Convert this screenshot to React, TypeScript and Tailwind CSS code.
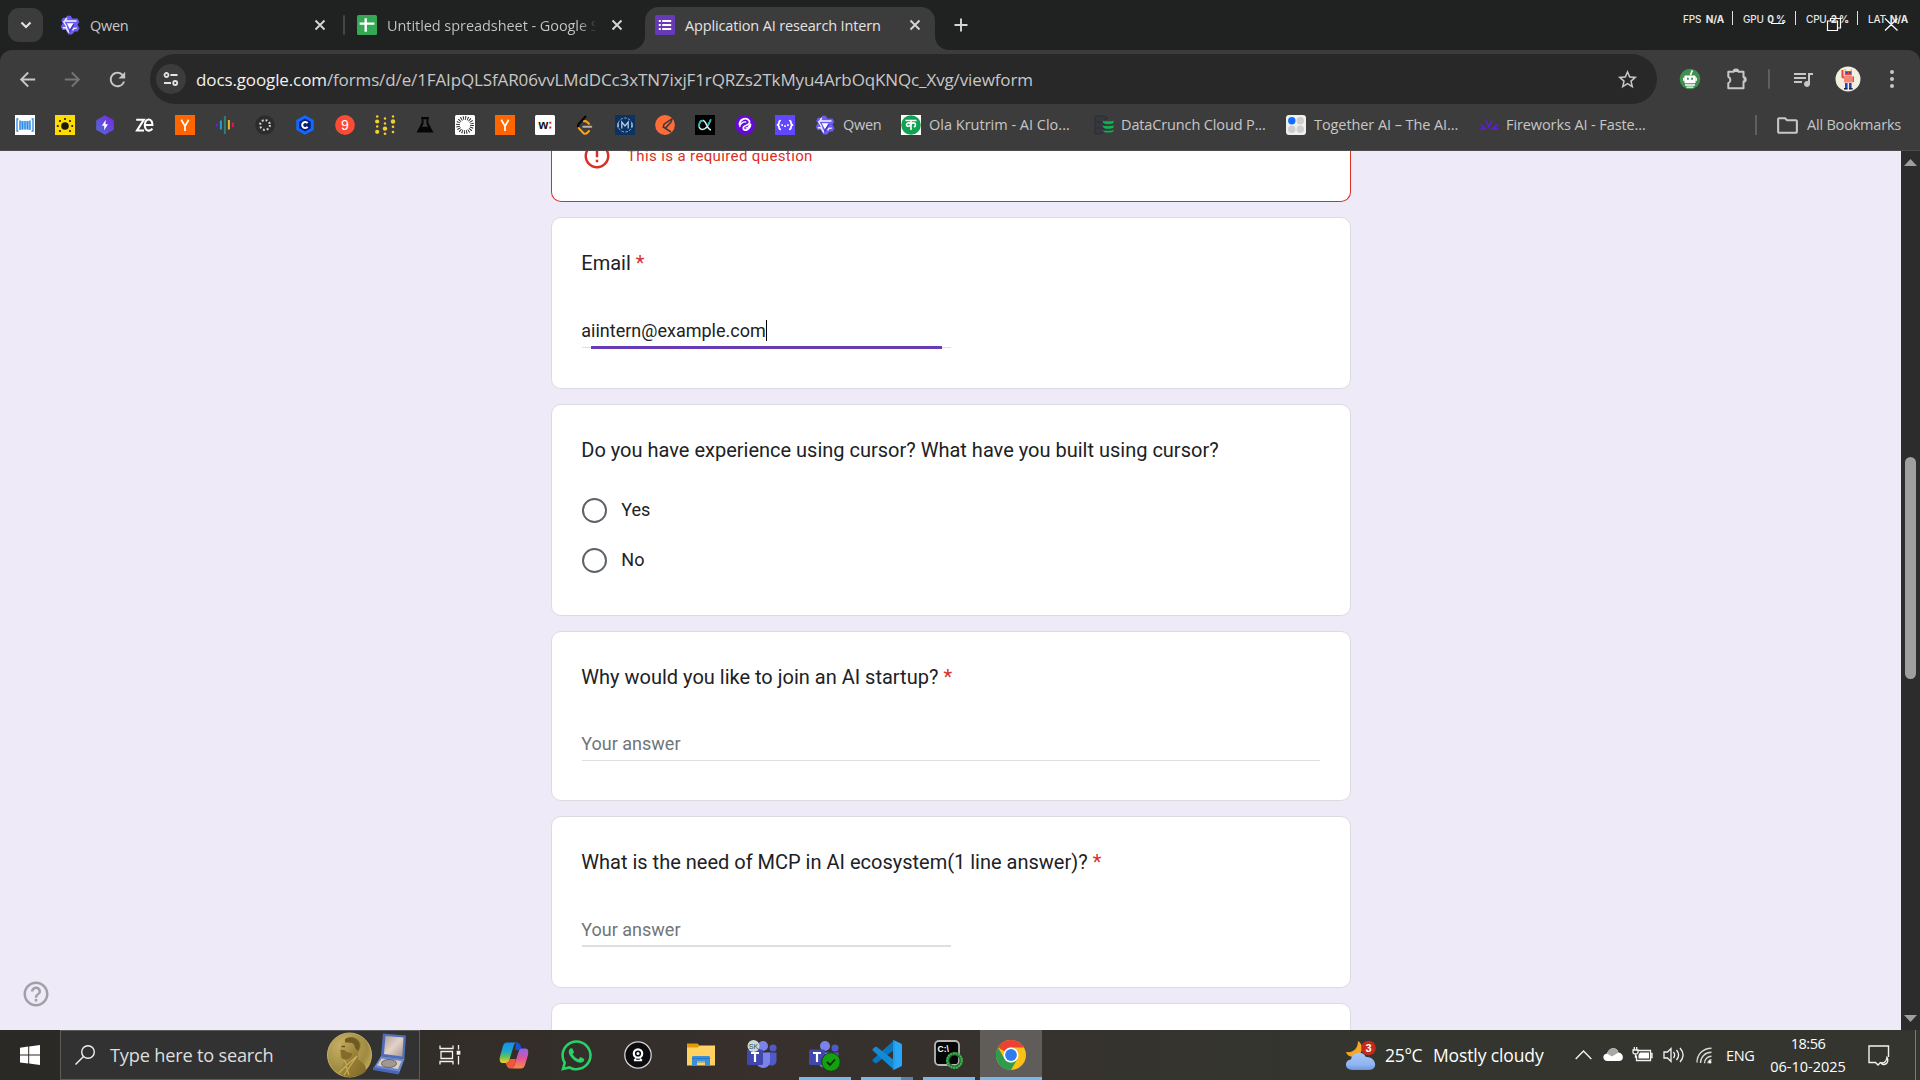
import type { ReactNode } from "react";
import {
  MdArrowBack,
  MdArrowForward,
  MdErrorOutline,
  MdHelpOutline,
  MdOutlineFolder,
  MdQueueMusic,
  MdRefresh,
  MdStarBorder,
} from "react-icons/md";
import { FaWhatsapp } from "react-icons/fa";

/* ---------- browser icons ---------- */

function QwenIcon() {
  return (
    <svg width="20" height="20" viewBox="0 0 20 20" className="shrink-0">
      <path d="M7 .8h3.800l1.500 2.700h5.200l1.800 3.200-1.800 3 2 3.600-1.800 3.200h-3L12 19.500H8.300L5.800 15H2.500L.7 11.800l2-3.500L1.200 5.500 3 2.800h3z" fill="#6a5cf0" />
      <path d="M6.800 2.800 4.800 6h11.700M2.800 12.800h3.400L9 17.500" fill="none" stroke="#f4f2ff" strokeWidth="1.500" />
      <path d="M6.800 8.300 10 14.200l3.600-5.900z" fill="#fff" />
      <path d="m16.800 13.200-3 .100-1.200 2.200M3.400 6.200 7 12.500" fill="none" stroke="#f4f2ff" strokeWidth="1.300" />
      <path d="m9.300 16.800 4.500-7.500" stroke="#3a2bc8" strokeWidth="1.200" />
    </svg>
  );
}

function SheetsIcon() {
  return (
    <svg width="20" height="20" viewBox="0 0 20 20" className="shrink-0">
      <rect width="20" height="20" rx="1.5" fill="#34a853" />
      <path d="M8.7 3.3v13.4M2.6 8.6h14.8" stroke="#fff" strokeWidth="2.4" />
    </svg>
  );
}

function FormsIcon() {
  return (
    <svg width="20" height="20" viewBox="0 0 20 20" className="shrink-0">
      <rect width="20" height="20" rx="1.5" fill="#673ab7" />
      <g fill="#fff">
        <path d="M3.8 5h2v2h-2zM3.8 9h2v2h-2zM3.8 13h2v2h-2zM7.2 5h9v2h-9zM7.2 9h9v2h-9zM7.2 13h9v2h-9z" />
      </g>
    </svg>
  );
}

function CloseIcon() {
  return (
    <svg width="16" height="16" viewBox="0 0 16 16" className="shrink-0">
      <path d="m3.5 3.5 9 9m0-9-9 9" stroke="#d6d6d6" strokeWidth="1.9" />
    </svg>
  );
}

function PuzzleIcon() {
  return (
    <svg width="24" height="24" viewBox="0 0 24 24" className="shrink-0">
      <path
        d="M3.3 4.8h5.4a2.3 2.3 0 0 1 4.6 0h5.2v5.4a2.2 2.2 0 0 1 0 4.4v6.6H3.3v-5a3.5 3.5 0 0 0 0-6.4z"
        fill="none"
        stroke="#c7c7c7"
        strokeWidth="2"
        strokeLinejoin="round"
      />
      <path d="M8.6 4.9a2.3 2.3 0 0 1 4.8 0zM18.6 10.1a2.3 2.3 0 0 1 0 4.6z" fill="#c7c7c7" />
    </svg>
  );
}

function RobotBadge() {
  return (
    <svg width="22" height="22" viewBox="0 0 22 22" className="shrink-0">
      <circle cx="11" cy="11" r="10.3" fill="#3f9150" />
      <path d="m11.5 7 1.8-4.6" stroke="#fff" strokeWidth="1.6" />
      <rect x="5.3" y="7.6" width="11.4" height="7.6" rx="1.2" fill="#fff" />
      <path d="M4 9.8h1.5v3H4zM16.5 9.8H18v3h-1.500z" fill="#fff" />
      <path d="M8 9.8h1.800v1.900H8zM12.200 9.800H14v1.900h-1.800z" fill="#3f9150" />
      <path d="M6 17h10M7.500 19.200h7" stroke="#fff" strokeWidth="1.300" />
    </svg>
  );
}

function Avatar() {
  return (
    <svg width="26" height="26" viewBox="0 0 26 26" className="shrink-0">
      <circle cx="13" cy="13" r="12.5" fill="#f3efe0" />
      <path d="M9.500 3v1.800h1.500V3zM15.500 3v1.800H17V3z" fill="#f0b840" />
      <rect x="9.800" y="5" width="7" height="4.400" fill="#e8463c" />
      <path d="M10.800 6h2v1.400h-2zM14 6h2v1.400h-2z" fill="#2b47b8" />
      <rect x="9" y="10" width="8.500" height="6.500" fill="#f2857c" />
      <path d="M6.500 4h2v7h-2zM17.500 10.500H19v5.500h-1.500zM6.800 10.500H9v1.800H6.800z" fill="#e8463c" />
      <path d="M10 17h2.600v5H10zM14 17h2.600v5H14z" fill="#2346b0" />
      <path d="M9 22h3.600v1.400H9zM14 22h3.600v1.400H14z" fill="#142058" />
    </svg>
  );
}

/* ---------- bookmark icons ---------- */

function Ico({ children }: { children: ReactNode }) {
  return (
    <svg width="20" height="20" viewBox="0 0 20 20" className="shrink-0 overflow-visible">
      {children}
    </svg>
  );
}

const iconText = '"Liberation Sans", sans-serif';

const smallBookmarks: ReactNode[] = [
  <>
    <rect width="20" height="20" fill="#fff" />
    <path d="M4.500 5.500c3.500 1 7.500 1 11 0v9.500c-3.500-1-7.500-1-11 0z" fill="#8cc4f6" />
    <path d="M3.500 3.800H2v12.400h1.500M16.500 3.800H18v12.400h-1.500" fill="none" stroke="#2f86d8" strokeWidth="1.300" />
    <path d="M5 5.500V15M7.500 6v8.500M10 6v8.500M12.500 6v8.500M15 5.500V15" stroke="#2f8be2" strokeWidth="1.300" />
  </>,
  <>
    <rect width="20" height="20" fill="#fcdc04" />
    <circle cx="10" cy="11" r="3.800" fill="#1d1a0d" />
    <g fill="#1d1a0d">
      <circle cx="10" cy="4" r="1.100" /><circle cx="5" cy="6" r="1.100" /><circle cx="15" cy="6" r="1.100" />
      <circle cx="2.800" cy="11" r="1.100" /><circle cx="17.200" cy="11" r="1.100" /><circle cx="5" cy="16" r="1.100" />
      <circle cx="15" cy="16" r="1.100" />
    </g>
  </>,
  <>
    <defs>
      <linearGradient id="hexBolt" x1="0" y1="1" x2="1" y2="0">
        <stop offset="0" stopColor="#4f6fd0" /><stop offset="1" stopColor="#7a25e8" />
      </linearGradient>
    </defs>
    <path d="m10 .3 8.800 5v9.400l-8.800 5-8.800-5V5.300z" fill="url(#hexBolt)" />
    <path d="M10.800 4.800 6.800 10.800h2.500l-.3 4.400 4-6h-2.600z" fill="#fff" />
  </>,
  <path d="M1.200 4.700h7.600L2 15.500h7M10 10h7.400c.3-7.200-7.600-7.400-7.600 0 0 6.800 5.400 6.600 7.600 3.600" fill="none" stroke="#fff" strokeWidth="2.100" />,
  <>
    <rect width="20" height="20" fill="#ff6600" />
    <path d="m6.300 4.800 3.700 6.400 3.700-6.400M10 11v5" fill="none" stroke="#fff" strokeWidth="1.700" />
  </>,
  <g strokeWidth="2">
    <path d="M1.900 8.500v3" stroke="#6a1fd0" /><path d="M5.900 5.500v9" stroke="#1b9fe0" /><path d="M9.900 1v18" stroke="#2d8077" />
    <path d="M13.900 5v9.500" stroke="#f0b81a" /><path d="M17.800 7.500V12" stroke="#e8135c" />
  </g>,
  <>
    <circle cx="10" cy="10" r="9.800" fill="#2c2c2c" />
    <circle cx="10" cy="10" r="4.900" fill="none" stroke="#d4d4d4" strokeWidth="2" strokeDasharray="1.900 1.950" />
  </>,
  <>
    <path d="m10 .2 8.700 4.900v9.800L10 19.800l-8.700-4.900V5.100z" fill="#1369ff" />
    <path d="m10 3.500 5.800 3.200v6.600L10 16.500l-5.800-3.200V6.700z" fill="#0a1e78" />
    <path d="M12.600 8.200a3 3 0 1 0 0 3.600" fill="none" stroke="#fff" strokeWidth="2" />
  </>,
  <>
    <circle cx="10" cy="10" r="9.900" fill="#fb4a36" />
    <text x="10" y="15" textAnchor="middle" fontFamily={iconText} fontSize="14" fill="#fff">9</text>
  </>,
  <g fill="#f5cf2e">
    <circle cx="2.200" cy="1.500" r="1.300" /><circle cx="2.200" cy="6.500" r="2.100" /><circle cx="2.200" cy="11.500" r="1.200" /><circle cx="2.200" cy="16.800" r="2.100" />
    <circle cx="10" cy="3.500" r="1.200" /><circle cx="10" cy="8.500" r="1.200" /><circle cx="10" cy="13.600" r="2.200" /><circle cx="10" cy="18.800" r="1.300" />
    <circle cx="18" cy="1.500" r="1.200" /><circle cx="18" cy="6.500" r="2.200" /><circle cx="18" cy="11.800" r="1.300" /><circle cx="18" cy="17" r="1.300" />
  </g>,
  <>
    <path d="M7.200 3v5L2.600 16.800h14.800L12.800 8V3" fill="#050505" stroke="#050505" strokeWidth="1.200" />
    <path d="M6 2.800h8" stroke="#050505" strokeWidth="1.500" />
    <path d="M8.500 4.200h3v4.500l1.600 3H6.900l1.600-3z" fill="#3c3c3c" />
  </>,
  <>
    <rect width="20" height="20" rx="1.500" fill="#fff" />
    <circle cx="10" cy="10" r="7" fill="none" stroke="#222" strokeWidth="3.800" strokeDasharray=".9 1.300" />
  </>,
  <>
    <rect width="20" height="20" fill="#ff6600" />
    <path d="m6.300 4.800 3.700 6.400 3.700-6.400M10 11v5" fill="none" stroke="#fff" strokeWidth="1.700" />
  </>,
  <>
    <rect width="20" height="20" rx="1.500" fill="#fff" />
    <text x="3.400" y="13.500" fontFamily={iconText} fontSize="12.500" fontWeight="700" fill="#111">w</text>
    <path d="M14.300 6.800h2v2h-2zM14.300 11.500h2v2h-2z" fill="#e3262e" />
  </>,
  <g fill="none" strokeWidth="2.100" strokeLinecap="round">
    <path d="M10.500 1.500 3.800 9c-1 1.300-1 2.600 0 3.800" stroke="#070707" />
    <path d="M3.800 13c.5.800 1 1.400 2 2.300l2.500 2.600c1.200 1.100 2.800 1 4-.2l1.700-1.700M9 6.200c1.200-.3 2.200 0 3.100.900l1.800 1.700" stroke="#ffa116" />
    <path d="M8.300 11.700h7.900" stroke="#b3b3b3" />
  </g>,
  <>
    <rect width="20" height="20" fill="#0b3260" />
    <circle cx="10" cy="10" r="7" fill="none" stroke="#8fb4d6" strokeWidth="1" strokeDasharray="2.500 1.500" />
    <path d="M6.800 13.500V7l3.200 4 3.200-4v6.500M3 8v4.500M17 8v4.500" fill="none" stroke="#b4cde4" strokeWidth="1.300" />
  </>,
  <>
    <circle cx="10" cy="10" r="9.900" fill="#ff6c37" />
    <path d="m17 3.800-8 5.400-.8 3 2.600.6 5.200-5.700zM9 12.500l7 4.500" fill="none" stroke="#3c3c3c" strokeWidth="1.500" />
  </>,
  <>
    <rect width="20" height="20" fill="#000" />
    <path d="M15.800 4.500c-2 5.500-5 10-8.500 10-4.700 0-4-9 .7-9 3.300 0 4 9 8 9.500" fill="none" stroke="#d9f4f4" strokeWidth="1.500" />
    <path d="M4.300 12c-.8-3 .8-6.500 3.700-6.500M12.500 10.500c1.200-2 2.300-3.700 3.300-6" fill="none" stroke="#17b8b8" strokeWidth="1.700" />
  </>,
  <>
    <circle cx="10" cy="10" r="9.900" fill="#6708d6" />
    <path d="M4.500 9.500C4.500 4.500 10 2.500 13 4.500c2.800 2 1.500 4.500-1 5.500S7.500 12 8.500 14c1.200 2.300 6.500.8 7-4.500" fill="none" stroke="#fff" strokeWidth="1.800" strokeLinecap="round" />
    <path d="M4.800 11.500C5 9 8 6.500 10.800 7M11 13c2 0 2.800-1 3.500-3" fill="none" stroke="#fff" strokeWidth="1.300" strokeLinecap="round" />
  </>,
  <>
    <rect width="20" height="20" fill="#6147ff" />
    <path d="M6 5.500c-2 0-2 .8-2 2.200S3.500 10 1.800 10C3.500 10 4 11 4 12.300s0 2.200 2 2.200M14 5.500c2 0 2 .8 2 2.200s.5 2.300 2.200 2.300c-1.700 0-2.200 1-2.200 2.300s0 2.200-2 2.200" fill="none" stroke="#fff" strokeWidth="1.700" />
    <path d="M6.300 9.300h1.700v1.700H6.300zM9.200 10.300h1.700V12H9.200zM12.100 9.300h1.700v1.700h-1.700z" fill="#fff" />
  </>,
];

/* ---------- browser chrome ---------- */

function TabStrip() {
  return (
    <div className="relative flex h-[50px] items-center bg-[#202221] text-[14.5px] text-[#dcdcdc]">
      <div className="ml-2 flex h-[34px] w-[35px] shrink-0 items-center justify-center rounded-[11px] bg-[#3c3c3c]">
        <svg width="12" height="12" viewBox="0 0 12 12">
          <path d="m1.500 3.500 4.500 4.500 4.500-4.500" fill="none" stroke="#e3e3e3" strokeWidth="2.100" />
        </svg>
      </div>
      <div className="ml-[17px] flex w-[268px] shrink-0 items-center">
        <QwenIcon />
        <span className="ml-[10px] flex-1 pt-[2px] tracking-[-0.3px] text-[#c7c7c7]">Qwen</span>
        <CloseIcon />
      </div>
      <div className="ml-[15px] h-5 w-[2px] shrink-0 rounded bg-[#454746]" />
      <div className="ml-3 flex w-[268px] shrink-0 items-center">
        <SheetsIcon />
        <span className="ml-[10px] w-[212px] overflow-hidden whitespace-nowrap bg-linear-to-r from-[#c7c7c7] from-90% to-transparent to-[99%] bg-clip-text pt-[2px] tracking-[-0.06px] text-transparent">
          Untitled spreadsheet - Google S
        </span>
        <span className="ml-[10px]"><CloseIcon /></span>
      </div>
      <div className="relative ml-5 flex h-[43px] w-[290px] shrink-0 items-center self-end rounded-t-[14px] bg-[#3c3c3c] pb-[7px] pl-[10px]">
        <svg width="14" height="14" viewBox="0 0 14 14" className="absolute bottom-0 left-[-14px]">
          <path d="M14 0v14H0A14 14 0 0 0 14 0" fill="#3c3c3c" />
        </svg>
        <svg width="14" height="14" viewBox="0 0 14 14" className="absolute right-[-14px] bottom-0">
          <path d="M0 0v14h14A14 14 0 0 1 0 0" fill="#3c3c3c" />
        </svg>
        <FormsIcon />
        <span className="ml-[10px] w-[222px] whitespace-nowrap pt-[2px] tracking-[-0.15px] text-[#e3e3e3]">Application AI research Intern</span>
        <CloseIcon />
      </div>
      <svg width="16" height="16" viewBox="0 0 16 16" className="ml-[18px] shrink-0">
        <path d="M8 1.500v13M1.500 8h13" stroke="#d6d6d6" strokeWidth="1.900" />
      </svg>
      <StatsOverlay />
    </div>
  );
}

function Stat({ name, value, w }: { name: string; value: string; w: string }) {
  return (
    <div className={`flex shrink-0 items-center justify-between pt-[2px] ${w}`}>
      <span className="font-medium">{name}</span>
      <span className="font-bold">{value}</span>
    </div>
  );
}

function StatsOverlay() {
  return (
    <>
      <div className="absolute top-[11px] left-[1683px] flex h-[14px] items-center font-['Inter',sans-serif] text-[10px] tracking-[-0.2px] text-[#e6e6e6]">
        <Stat name="FPS" value="N/A" w="w-[41px]" />
        <div className="ml-2 h-[14px] w-px bg-[#e0e0e0]" />
        <Stat name="GPU" value="0 %" w="ml-[10px] w-[43px]" />
        <div className="ml-[9px] h-[14px] w-px bg-[#e0e0e0]" />
        <Stat name="CPU" value="2 %" w="ml-[10px] w-[43px]" />
        <div className="ml-2 h-[14px] w-px bg-[#e0e0e0]" />
        <Stat name="LAT" value="N/A" w="ml-[10px] w-[40px]" />
      </div>
      <svg width="132" height="16" viewBox="0 0 132 16" className="absolute top-[16px] left-[1770px]" fill="none" stroke="#fff" strokeWidth="1.200">
        <path d="M1 7.500h13M57.500 5h10v9.500h-10zM60.500 5V2.500h10V12h-3M115 2.500l12.500 12m0-12-12.500 12" />
      </svg>
    </>
  );
}

function Toolbar() {
  return (
    <div className="flex h-[58px] items-center text-[#c7c7c7]">
      <MdArrowBack size={23} className="ml-4 shrink-0" />
      <MdArrowForward size={23} className="ml-[22px] shrink-0 text-[#757575]" />
      <MdRefresh size={23} className="ml-[22px] shrink-0" />
      <div className="ml-[21px] flex h-[50px] w-[1507px] shrink-0 items-center rounded-full bg-[#282828]">
        <div className="ml-[6px] flex size-[30px] items-center justify-center rounded-full bg-[#3c3c3c]">
          <svg width="18" height="18" viewBox="0 0 18 18" fill="none" stroke="#e3e3e3" strokeWidth="1.800">
            <circle cx="4.500" cy="5" r="2" />
            <path d="M8.500 5h7M2 13h7" />
            <circle cx="13.200" cy="13" r="2" />
          </svg>
        </div>
        <span className="ml-[10px] flex-1 whitespace-nowrap pt-[2px] text-[17px] tracking-[-0.12px]">
          <span className="text-[#f0f0f0]">docs.google.com</span>
          /forms/d/e/1FAIpQLSfAR06vvLMdDCc3xTN7ixjF1rQRZs2TkMyu4ArbOqKNQc_Xvg/viewform
        </span>
        <MdStarBorder size={23} className="mr-[18px]" />
      </div>
      <span className="ml-[22px]"><RobotBadge /></span>
      <span className="ml-6"><PuzzleIcon /></span>
      <div className="ml-[19px] h-5 w-[2px] shrink-0 rounded bg-[#5f5f5f]" />
      <MdQueueMusic size={24} className="ml-[21px] shrink-0" />
      <span className="ml-5"><Avatar /></span>
      <svg width="6" height="20" viewBox="0 0 6 20" className="ml-[28px] shrink-0" fill="#c7c7c7">
        <circle cx="3" cy="3" r="2" /><circle cx="3" cy="10" r="2" /><circle cx="3" cy="17" r="2" />
      </svg>
    </div>
  );
}

function BookmarksBar() {
  return (
    <div className="flex h-[34px] items-center whitespace-nowrap pl-[15px] text-[14.5px] text-[#c7c7c7]">
      <div className="flex shrink-0 gap-5">
        {smallBookmarks.map((icon, i) => (
          <Ico key={i}>{icon}</Ico>
        ))}
      </div>
      <span className="ml-5"><QwenIcon /></span>
      <span className="ml-2 w-[38px] tracking-[-0.3px]">Qwen</span>
      <span className="ml-5">
        <Ico>
          <rect width="20" height="20" fill="#fff" />
          <circle cx="10" cy="10" r="9.800" fill="#12a150" />
          <path d="M4.500 5.500h11M10 5.500v9.500M10 9c-2-2-4.500-1-4.500.8s3 2 4.500-.3c1-2.500 4.500-2 4.500.2 0 1.500-.8 2-1.600 2.300" fill="none" stroke="#fff" strokeWidth="1.600" />
        </Ico>
      </span>
      <span className="ml-2 w-[141px]">Ola Krutrim - AI Clo...</span>
      <span className="ml-6">
        <Ico>
          <path d="M1 1h9l4 2-4 2v12l-4 2H1zM1 7h7M1 13h7" fill="#37373f" stroke="#2c2c3c" strokeWidth="1" />
          <path d="M8.500 5.500c2 1.200 8.500 1.200 11 0v2.400c-2.500 1.300-8.500 1.300-10 0zM8.500 10.300c2 1.200 8.500 1.200 11 0v2.400c-2.500 1.300-8.500 1.300-10 0zM8.500 15c2 1.200 8.500 1.200 11 0v1.500c-2.500 1.300-8.500 1.300-10 0z" fill="#06b84f" />
        </Ico>
      </span>
      <span className="ml-[7px] w-[145px] tracking-[-0.13px]">DataCrunch Cloud P...</span>
      <span className="ml-5">
        <Ico>
          <rect width="20" height="20" rx="3" fill="#f1efed" />
          <circle cx="5.800" cy="5.800" r="3.700" fill="#0f6fff" />
          <g fill="#d0cecd">
            <circle cx="14.300" cy="5.800" r="3.700" /><circle cx="5.800" cy="14.300" r="3.700" /><circle cx="14.300" cy="14.300" r="3.700" />
          </g>
        </Ico>
      </span>
      <span className="ml-2 w-[145px] tracking-[-0.08px]">Together AI – The AI...</span>
      <span className="ml-5">
        <Ico>
          <path d="m7 5.500 3 6.500 3-6.500M1.500 9.500l5 4.500H.2M18.500 9.500l-5 4.500h6.300" fill="none" stroke="#5b1fd8" strokeWidth="1.700" />
        </Ico>
      </span>
      <span className="ml-[7px] w-[141px] tracking-[-0.1px]">Fireworks AI - Faste...</span>
      <div className="ml-[108px] h-5 w-[2px] bg-[#5f5f5f]" />
      <MdOutlineFolder size={25} className="ml-[18px] shrink-0" />
      <span className="ml-[7px] tracking-[-0.2px]">All Bookmarks</span>
    </div>
  );
}

/* ---------- form ---------- */

function Title({ children, required }: { children: ReactNode; required?: boolean }) {
  return (
    <h2 className="ml-[-0.7px] text-[20px] leading-[30px] text-[#202124]">
      {children}
      {required && <span className="pl-[5px] text-[#d93025]">*</span>}
    </h2>
  );
}

function Card({ className, children }: { className: string; children?: ReactNode }) {
  return (
    <section className={`w-[800px] shrink-0 rounded-[10px] border border-[#dadce0] bg-white px-[30px] pt-[30px] ${className}`}>
      {children}
    </section>
  );
}

function Radio({ label }: { label: string }) {
  return (
    <div className="flex h-[50px] items-center">
      <div className="size-[25px] rounded-full border-[2.5px] border-[#5f6368]" />
      <span className="ml-[14.3px] text-[18px] leading-[24px] text-[#202124]">{label}</span>
    </div>
  );
}

function FormPage() {
  return (
    <main className="relative flex flex-1 flex-col items-start gap-[15px] overflow-hidden bg-[#eeeaf8] pl-[551px] font-['Roboto',sans-serif]">
      <section className="h-[51px] w-[800px] shrink-0 overflow-hidden rounded-b-[10px] border border-t-0 border-[#d93025] bg-white pl-[30px]">
        <div className="mt-[-10px] flex h-[30px] items-center text-[#d93025]">
          <MdErrorOutline size={30} />
          <span className="ml-[15px] text-[15px] tracking-[0.375px]">This is a required question</span>
        </div>
      </section>

      <Card className="h-[172px]">
        <Title required>Email</Title>
        <div className="mt-[37px] mb-px ml-[-0.7px] flex h-[30px] items-center text-[18px] text-[#202124]">
          aiintern@example.com
          <span className="h-[21px] w-px bg-black" />
        </div>
        <div className="flex h-[3px] w-[369px] items-center justify-center">
          <span className="h-px w-[9px] bg-[#dedede]" />
          <span className="h-[3px] flex-1 bg-[#673ab7]" />
          <span className="h-px w-[9px] bg-[#dedede]" />
        </div>
      </Card>

      <Card className="h-[212px]">
        <Title>Do you have experience using cursor? What have you built using cursor?</Title>
        <div className="mt-5">
          <Radio label="Yes" />
          <Radio label="No" />
        </div>
      </Card>

      <Card className="h-[170px]">
        <Title required>Why would you like to join an AI startup?</Title>
        <div className="mt-[37px] ml-[-0.7px] text-[18px] leading-[30px] text-[#70757a]">Your answer</div>
        <div className="mt-px h-px bg-[#dedede]" />
      </Card>

      <Card className="h-[172px]">
        <Title required>What is the need of MCP in AI ecosystem(1 line answer)?</Title>
        <div className="mt-[38px] ml-[-0.7px] text-[18px] leading-[30px] text-[#70757a]">Your answer</div>
        <div className="h-[2px] w-[369px] bg-[#dedede]" />
      </Card>

      <Card className="h-[172px]" />

      <MdHelpOutline size={30} className="absolute bottom-[21px] left-[21px] text-[#a19fa8]" />
    </main>
  );
}

function Scrollbar() {
  return (
    <div className="flex w-[19px] shrink-0 flex-col items-center bg-[#2c2c2c]">
      <svg width="13" height="7" viewBox="0 0 13 7" className="mt-2">
        <path d="M6.500 0 13 7H0z" fill="#9f9f9f" />
      </svg>
      <div className="mt-[291px] h-[222px] w-[11px] rounded-full bg-[#9f9f9f]" />
      <svg width="13" height="7" viewBox="0 0 13 7" className="mt-auto mb-2">
        <path d="M6.500 7 0 0h13z" fill="#9f9f9f" />
      </svg>
    </div>
  );
}

/* ---------- taskbar icons ---------- */

function NobelMedal() {
  return (
    <svg width="82" height="48" viewBox="0 0 82 48" className="shrink-0">
      <defs>
        <radialGradient id="gold" cx=".35" cy=".3" r=".8">
          <stop offset="0" stopColor="#c8b368" /><stop offset=".7" stopColor="#a08a42" /><stop offset="1" stopColor="#c9b260" />
        </radialGradient>
        <linearGradient id="bust" x1="0" y1="0" x2="1" y2="1">
          <stop offset="0" stopColor="#cdb96c" /><stop offset=".5" stopColor="#9c8339" /><stop offset="1" stopColor="#7d6526" />
        </linearGradient>
        <linearGradient id="lining" x1="0" y1="0" x2="1" y2="1">
          <stop offset="0" stopColor="#b49e94" /><stop offset=".5" stopColor="#e2d3c8" /><stop offset="1" stopColor="#a8958e" />
        </linearGradient>
      </defs>
      <circle cx="22.500" cy="24" r="22" fill="url(#gold)" stroke="#c5af63" strokeWidth="1" />
      <path d="M17 7c6-5 14-2 16.500 4 1.200 4-.5 8-2.500 11v6l6 5c1.500 2 2 5 2 7-4 4-10 6-16.500 6-5 0-9-2-11.500-4l5-9 1.500-4.500-4-1c-1.500-1.500-1-3.500-.5-5.500l-2-1.500 3-6c0-3 1-5 3-6.500z" fill="url(#bust)" />
      <path d="M18 8c5-3 12-2 14.500 4 .8 3 0 6-1.500 8l-3-3c0-3-1-4-3-5s-5-.5-7-.5z" fill="#6f5a20" />
      <path d="M13.500 19c3-1 5 .500 6 2l6 1.500c-1 4-4 6-8 6l-3-1.500z" fill="#836b2a" />
      <path d="m17 29 3 5 10-9-13 19M12 42l7-7 3 9" fill="none" stroke="#c9b260" strokeWidth="1.100" />
      <path d="M14.500 15.500h3.500" stroke="#5f4b18" strokeWidth="1.300" />
      <path d="m56 2.500 23 2-1.500 23.500L54 25z" fill="#4f6db8" />
      <path d="m58.500 5 18 1.500-1.200 19L57 23z" fill="url(#lining)" />
      <path d="m54 25 23.500 3L72 42.500l-26-4.500z" fill="#6a86cc" />
      <path d="m54.500 27.500 20 2.500-3.500 8-21-3.500z" fill="#d8ccc4" />
      <path d="m46 36 26 4.500-.500 3-25.500-4.500z" fill="#4868b4" />
      <ellipse cx="62" cy="32.500" rx="7.500" ry="4" fill="#a29891" stroke="#6f6762" strokeWidth="1" />
    </svg>
  );
}

function TaskViewIcon() {
  return (
    <svg width="22" height="20" viewBox="0 0 22 20" fill="none" stroke="#f2f2f2" strokeWidth="1.300" className="shrink-0">
      <path d="M1 .5v3h13v-3M1 19.500v-3h13v3M2 6.500h11.500v7H2zM19.500 0v4.500M19.500 11v8.500" />
      <path d="M18.300 6.500h2.400V9h-2.400z" fill="#fff" />
    </svg>
  );
}

function CopilotIcon() {
  return (
    <svg width="30" height="27" viewBox="0 0 30 27" className="shrink-0">
      <defs>
        <linearGradient id="cpA" x1="0" y1="0" x2="0" y2="1">
          <stop offset="0" stopColor="#1a8cf0" /><stop offset=".45" stopColor="#1cabc4" /><stop offset=".7" stopColor="#6dbd58" /><stop offset="1" stopColor="#f6d121" />
        </linearGradient>
        <linearGradient id="cpB" x1="0" y1="0" x2="0" y2="1">
          <stop offset="0" stopColor="#8a63f0" /><stop offset=".5" stopColor="#e0559c" /><stop offset="1" stopColor="#ff8a3d" />
        </linearGradient>
      </defs>
      <path d="M17 .500c3 0 4 1.500 4.800 4l1 3.500h-6.500z" fill="#1c50d8" />
      <path d="M8 .500h10c-2 0-2.800 1.500-3.300 3l-4 13.500c-.8 2.500-1.500 4-4.200 4H3.500C.500 21 .300 17.500 1 14.500L4 4c.8-2.500 2-3.500 4-3.500z" fill="url(#cpA)" />
      <path d="M22 26.500H12c2 0 2.800-1.500 3.300-3l4-13c.8-2.500 1.500-4 4.200-4h3c3 0 3.200 3.500 2.500 6.500l-3 10c-.8 2.500-2 3.500-4 3.500z" fill="url(#cpB)" />
      <path d="M12 26.500c-3 0-4-1.500-4.700-4L6.500 21c3-.3 3.500-2 4.200-4h6.300l-1.700 6.500c-.6 2-1.300 3-3.300 3z" fill="#f0563c" />
    </svg>
  );
}

function WebcamIcon() {
  return (
    <svg width="28" height="28" viewBox="0 0 28 28" className="shrink-0">
      <circle cx="14" cy="14" r="13.200" fill="#0c0c10" stroke="#d5d5d5" strokeWidth="1.300" />
      <circle cx="14" cy="12.500" r="4.200" fill="none" stroke="#fff" strokeWidth="2.200" />
      <circle cx="14" cy="12.500" r="1.500" fill="#fff" />
      <path d="M10 19.500h8M12 17.500l-2 2M16 17.500l2 2" stroke="#fff" strokeWidth="1.600" />
    </svg>
  );
}

function FolderIcon() {
  return (
    <svg width="28" height="24" viewBox="0 0 28 24" className="shrink-0">
      <path d="M0 .500h10.500l2.500 2.500-2 3H0z" fill="#e29a0b" />
      <path d="M0 4.500h10.500L13 2.500h15v20H0z" fill="#ffd262" />
      <path d="M5 23v-8.500c0-1 .5-1.500 1.500-1.500h15c1 0 1.500.500 1.500 1.500V23h-5v-5h-8v5z" fill="#3b8fd8" />
      <path d="M5 15.500h18M10 19h8" stroke="#1f6cb8" strokeWidth=".7" />
    </svg>
  );
}

function TeamsIcon({ variant }: { variant: "initials" | "available" }) {
  return (
    <svg width="32" height="30" viewBox="0 0 32 30" className="shrink-0 overflow-visible">
      <circle cx="26" cy="8" r="3.600" fill="#5059c9" />
      <circle cx="16" cy="6" r="5" fill="#7b83eb" />
      <path d="M20 12.500h9.500v8c0 6-8 7-9.500 1.500z" fill="#5059c9" />
      <path d="M9 12.500h14V21c0 8.500-12 9.500-14 1z" fill="#7b83eb" />
      <rect x="0" y="9.500" width="16" height="15.500" rx="1.500" fill="#4048ae" />
      <path d="M4 13h8M8 13v9" stroke="#fff" strokeWidth="2.200" />
      {variant === "initials" ? (
        <>
          <circle cx="6.500" cy="6" r="6" fill="#cbdad8" />
          <text x="6.500" y="8.800" textAnchor="middle" fontFamily={iconText} fontSize="7" fill="#33504d">SK</text>
        </>
      ) : (
        <>
          <circle cx="22" cy="22" r="9.300" fill="#13a10e" stroke="#173b16" strokeWidth="1" />
          <path d="m18 22 3 3 5-5.500" fill="none" stroke="#10290f" strokeWidth="1.800" />
        </>
      )}
    </svg>
  );
}

function VSCodeIcon() {
  return (
    <svg width="30" height="30" viewBox="0 0 30 30" className="shrink-0">
      <path d="M22 .300 1 19.300c-.8.800-.6 1.600 0 2.100l2 1.600c.6.400 1.200.300 1.800-.100L24 8.500z" fill="#0a75c0" />
      <path d="M22 29.700 1 10.700c-.8-.8-.6-1.600 0-2.100L3 7c.6-.4 1.200-.3 1.800.1L24 21.500z" fill="#1489d4" />
      <path d="m22 .300 6.500 3c.8.400 1.500 1 1.500 2v19.400c0 1-.7 1.600-1.500 2l-6.500 3c-1 .3-1.600 0-2-.3 1 .5 2 0 2-1.400V2c0-1.400-1-1.900-2-1.400.4-.5 1-.600 2-.300z" fill="#2ba5f7" />
      <path d="M22 2v26" stroke="#209be8" strokeWidth="2" />
    </svg>
  );
}

function TerminalIcon() {
  return (
    <svg width="30" height="30" viewBox="0 0 30 30" className="shrink-0">
      <rect x="1" y="1" width="24" height="24" rx="4" fill="#060606" stroke="#b7b7b7" strokeWidth="1.800" />
      <text x="3.500" y="12" fontFamily={iconText} fontSize="8.500" fontWeight="700" fill="#fff">C:\</text>
      <circle cx="20.500" cy="20.500" r="6.800" fill="none" stroke="#1f6d2c" strokeWidth="3.600" />
      <circle cx="20.500" cy="20.500" r="7.300" fill="none" stroke="#44b455" strokeWidth="2" strokeDasharray="2 .7" />
    </svg>
  );
}

function ChromeIcon() {
  return (
    <svg width="30" height="30" viewBox="0 0 30 30" className="shrink-0">
      <circle cx="15" cy="15" r="15" fill="#fbc116" />
      <path d="M2 7.500a15 15 0 0 1 26 0H15a7.500 7.500 0 0 0-6.500 3.800z" fill="#ea4335" />
      <path d="M2 7.500a15 15 0 0 0 13 22.500l6.500-11.300A7.500 7.500 0 0 1 8.500 18.700z" fill="#2d9c4c" />
      <circle cx="15" cy="15" r="7.500" fill="#fff" />
      <circle cx="15" cy="15" r="5.900" fill="#2f7bf0" />
    </svg>
  );
}

function TaskItem({ children, state }: { children: ReactNode; state: "idle" | "open" | "stacked" | "active" }) {
  return (
    <div className={`relative flex h-[50px] w-[62px] shrink-0 items-center justify-center ${state === "active" ? "bg-[#605c5a]" : ""}`}>
      {children}
      {state === "active" && <span className="absolute inset-x-0 bottom-0 h-[3px] bg-[#76b9ed]" />}
      {state === "open" && <span className="absolute inset-x-[5px] bottom-0 h-[3px] bg-[#76b9ed]" />}
      {state === "stacked" && (
        <span className="absolute inset-x-[5px] bottom-0 flex h-[3px]">
          <span className="w-10 bg-[#76b9ed]" />
          <span className="flex-1 bg-[#5585ad]" />
        </span>
      )}
    </div>
  );
}

function Taskbar() {
  return (
    <footer className="flex h-[50px] shrink-0 items-center bg-linear-to-r from-[#2b2925] via-[#37302c] via-40% to-[#34352f] to-70% text-white">
      <div className="flex w-[60px] shrink-0 justify-center">
        <svg width="20" height="20" viewBox="0 0 20 20" fill="#fff">
          <path d="m0 2.800 8.200-1.200v8H0zM9.200 1.500 20 0v9.600H9.200zM0 10.600h8.200v8L0 17.400zM9.200 10.600H20V20L9.200 18.600z" />
        </svg>
      </div>
      <div className="flex h-[50px] w-[360px] shrink-0 items-center border border-[#5c5c5b] bg-[#323232]">
        <svg width="20" height="20" viewBox="0 0 20 20" fill="none" stroke="#f2f2f2" strokeWidth="1.400" className="ml-[14px]">
          <circle cx="13" cy="7" r="6.300" />
          <path d="M8.500 11.500.500 19.500" />
        </svg>
        <span className="ml-[15px] w-[217px] pt-[2px] text-[18.2px] tracking-[-0.2px] text-[#dedede]">Type here to search</span>
        <NobelMedal />
      </div>
      <div className="ml-[19px]"><TaskViewIcon /></div>
      <div className="ml-[38px]"><CopilotIcon /></div>
      <div className="ml-[29px] flex size-[36px] items-center justify-center">
        <FaWhatsapp size={35} color="#25d366" className="shrink-0" />
      </div>
      <div className="ml-[30px]"><WebcamIcon /></div>
      <div className="ml-[18px] flex">
        <TaskItem state="idle"><FolderIcon /></TaskItem>
        <TaskItem state="idle"><TeamsIcon variant="initials" /></TaskItem>
        <TaskItem state="open"><TeamsIcon variant="available" /></TaskItem>
        <TaskItem state="stacked"><VSCodeIcon /></TaskItem>
        <TaskItem state="open"><TerminalIcon /></TaskItem>
        <TaskItem state="active"><ChromeIcon /></TaskItem>
      </div>
      <div className="ml-auto flex items-center">
        <svg width="32" height="31" viewBox="0 0 32 31" className="shrink-0">
          <defs>
            <linearGradient id="cloud" x1="0" y1="0" x2="0" y2="1">
              <stop offset="0" stopColor="#a9c5f5" /><stop offset=".7" stopColor="#8fb4f2" /><stop offset="1" stopColor="#6f93dc" />
            </linearGradient>
          </defs>
          <path d="M13 1c5 3 6 11-1 15-5 2-10 0-11-4 8 1 12-4 12-11z" fill="#f5a623" />
          <path d="M7.500 30C-1 30-1 20 6 19.500 7 12 18 10 21 17c10-1 13 13 3 13z" fill="url(#cloud)" />
          <circle cx="23.500" cy="8" r="7.300" fill="#c42b1c" />
          <text x="23.500" y="12" textAnchor="middle" fontFamily={iconText} fontSize="11" fontWeight="700" fill="#fff">3</text>
        </svg>
        <span className="ml-2 w-[48px] pt-px text-[17.500px] tracking-[-0.300px]">25°C</span>
        <span className="w-[113px] whitespace-nowrap pt-px text-[17.500px] tracking-[-0.120px]">Mostly cloudy</span>
        <svg width="17" height="10" viewBox="0 0 17 10" fill="none" stroke="#f2f2f2" strokeWidth="1.400" className="ml-[29px]">
          <path d="m.700 9 7.800-8 7.800 8" />
        </svg>
        <svg width="20" height="14" viewBox="0 0 20 14" className="ml-[11px]">
          <path d="M4.500 13C-1 13-1 6 4 5.500 6-1 14-1.500 15.500 4.500 21 5 21.500 13 16 13z" fill="#fff" />
          <path d="M4 5.500C6-1 14-1.500 15.500 4.500L9 8.500z" fill="#a8a8a6" />
        </svg>
        <svg width="21" height="16" viewBox="0 0 21 16" className="ml-[9px]" fill="none" stroke="#f2f2f2" strokeWidth="1.300">
          <path d="M6 3.500h12.500v10h-14V8.500M18.500 6.500H20v4h-1.500" />
          <path d="M8 5.500h9v6H6.500V8z" fill="#fff" stroke="none" />
          <path d="M1 3h5v2.500c0 2-5 2-5 0zM2.300 0v3M4.700 0v3M3.500 7v4" />
        </svg>
        <svg width="21" height="18" viewBox="0 0 21 18" className="ml-[10px]" fill="none" stroke="#f2f2f2" strokeWidth="1.300">
          <path d="M1 6h3.500l3.500-3.500v13L4.500 12H1zM10.500 6c1.500 2 1.500 4 0 6M13.500 4c2.500 3 2.500 7 0 10M17 2c4 4.500 4 9.500 0 14" />
        </svg>
        <svg width="16" height="17" viewBox="0 0 16 17" className="ml-[12px]" fill="none" stroke="#d8d8d6" strokeWidth="1.400">
          <path d="M1 15.500C1 7.500 7 1.200 15.500 1.200M4.500 16C4.500 10 9 5.300 15.500 5.300M8.500 16.200c0-3.700 3-7 7-7M12 16.300c0-1.800 1.500-3.500 3.500-3.500" />
          <circle cx="14" cy="15" r="1.500" fill="#fff" stroke="none" />
        </svg>
        <span className="ml-[14px] w-[30px] pt-px text-[14.500px] tracking-[-0.300px]">ENG</span>
        <div className="ml-[14px] flex w-[76px] flex-col items-center whitespace-nowrap text-[14.500px] leading-[23px]">
          <span className="tracking-[-0.500px]">18:56</span>
          <span>06-10-2025</span>
        </div>
        <svg width="22" height="21" viewBox="0 0 22 21" className="ml-[22px]" fill="none" stroke="#f2f2f2" strokeWidth="1.400">
          <path d="M12.500 17.500 10 20l-2.500-2.500H1V1h19.500v11" />
          <path d="M19 12.500c1.500 2 1 6-2 6.800-1.800.5-3.300-.3-4-1.500 3.500.7 5.500-2 6-5.300z" />
        </svg>
        <div className="ml-[25px] h-[50px] w-px bg-[#7a7a76]" />
        <div className="w-1" />
      </div>
    </footer>
  );
}

export default function App() {
  return (
    <div className="flex h-[1080px] w-[1920px] flex-col overflow-hidden bg-[#202221] font-['Open_Sans','Noto_Sans',sans-serif]">
      <TabStrip />
      <header className="h-[101px] shrink-0 rounded-t-[12px] border-b border-[#4c4b4e] bg-[#3c3c3c]">
        <Toolbar />
        <BookmarksBar />
      </header>
      <div className="flex min-h-0 flex-1">
        <FormPage />
        <Scrollbar />
      </div>
      <Taskbar />
    </div>
  );
}
